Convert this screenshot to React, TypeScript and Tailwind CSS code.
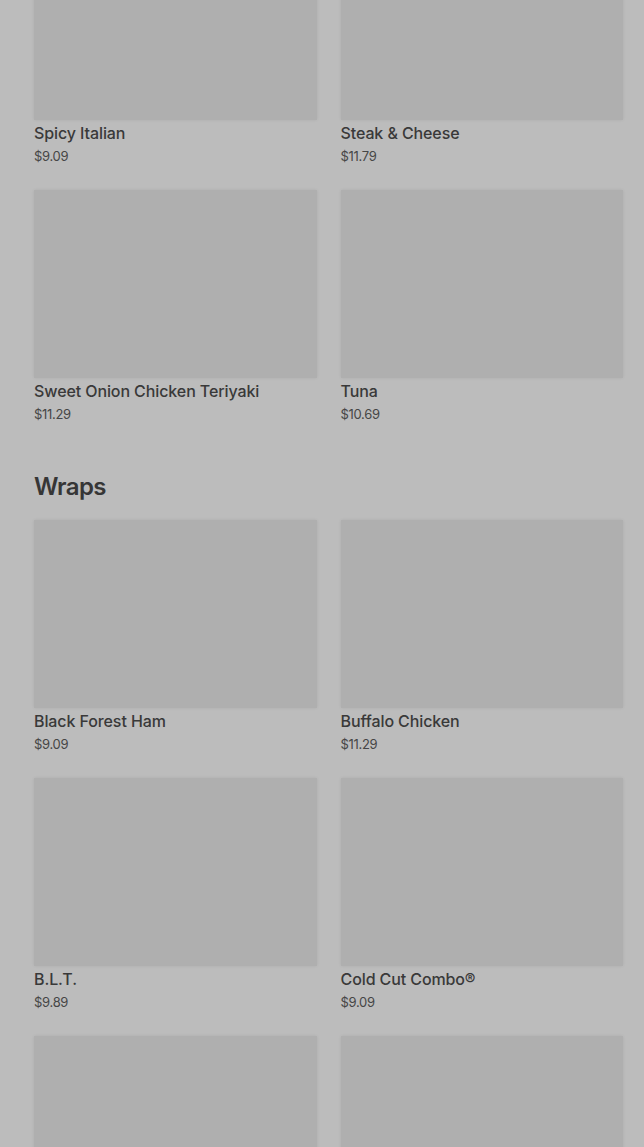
const subs = [
  { name: "Spicy Italian", price: "$9.09" },
  { name: "Steak & Cheese", price: "$11.79" },
  { name: "Sweet Onion Chicken Teriyaki", price: "$11.29" },
  { name: "Tuna", price: "$10.69" },
];

const wraps = [
  { name: "Black Forest Ham", price: "$9.09" },
  { name: "Buffalo Chicken", price: "$11.29" },
  { name: "B.L.T.", price: "$9.89" },
  { name: "Cold Cut Combo®", price: "$9.09" },
];

function MenuCard({ name, price }: { name?: string; price?: string }) {
  return (
    <div className="flex flex-col">
      <div className="h-[188px] w-full bg-[#afafaf] shadow-[0_0_3px_rgba(0,0,0,0.08)]" />
      {name && (
        <p className="mt-px text-[16px] leading-6 font-medium text-[#393939] tracking-[-0.1px]">
          {name}
        </p>
      )}
      {price && (
        <p className="mt-0.5 text-[13px] leading-[18px] text-[#464646] tracking-[-0.3px]">
          {price}
        </p>
      )}
    </div>
  );
}

export default function App() {
  return (
    <div
      className="h-screen overflow-hidden bg-[#bcbcbc] pl-[34px] pr-[21px]"
      style={{ fontFamily: "Inter, 'Liberation Sans', sans-serif" }}
    >
      <div className="-mt-[68px] grid grid-cols-2 gap-x-6 gap-y-[25px]">
        {subs.map((s) => (
          <MenuCard key={s.name} name={s.name} price={s.price} />
        ))}
      </div>

      <h2 className="mt-12 mb-[17px] text-[24px] leading-8 font-semibold text-[#363636] tracking-[-0.6px]">
        Wraps
      </h2>

      <div className="grid grid-cols-2 gap-x-6 gap-y-[25px]">
        {wraps.map((w) => (
          <MenuCard key={w.name} name={w.name} price={w.price} />
        ))}
        {/* next row, only the photos show above the fold */}
        <MenuCard />
        <MenuCard />
      </div>
    </div>
  );
}
